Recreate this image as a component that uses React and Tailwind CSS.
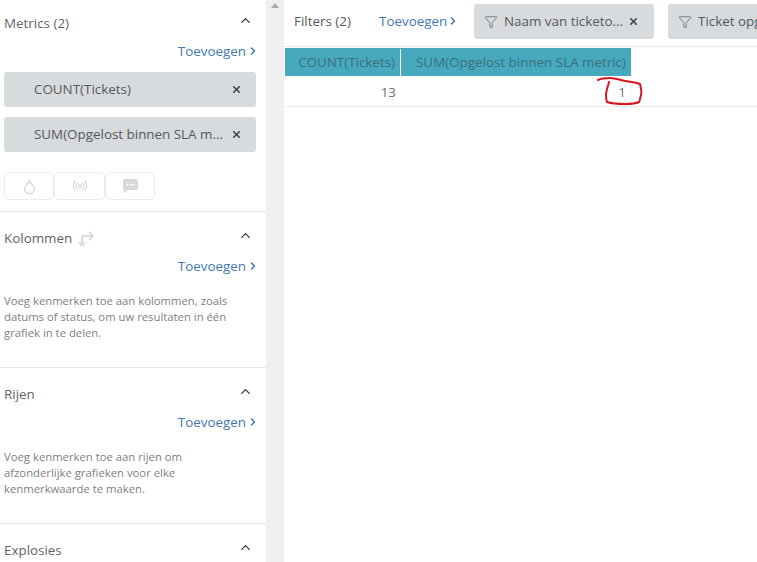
import React from 'react';
import { ChevronUp, ChevronRight, X, Filter, Droplet, Radio } from 'lucide-react';

function AddLink() {
	return (
		<div className="flex justify-end items-center h-5 text-[13.4px] text-[#3f78ae]">
			<span>Toevoegen</span>
			<ChevronRight size={12} strokeWidth={3} className="ml-[1px] -mr-[3px]" />
		</div>
	);
}

function SectionHead({ title, children }) {
	return (
		<div className="flex items-center h-5 pr-[3px]">
			<span className="text-[13.4px] text-[#5f6568]">{title}</span>
			{children}
			<ChevronUp size={15} strokeWidth={2} className="ml-auto -mt-[6px] text-[#2f3336]" />
		</div>
	);
}

function MetricChip({ label }) {
	return (
		<div className="flex items-center h-[35px] pl-[30px] pr-[14px] rounded-[3px] bg-[#d8dbdd] text-[13.4px] text-[#55595c]">
			<span className="flex-1 whitespace-nowrap">{label}</span>
			<X size={11} strokeWidth={3.5} className="shrink-0 text-[#3d4450]" />
		</div>
	);
}

function FilterChip({ label, className, closable }) {
	return (
		<div className={`flex items-center h-[35px] pl-[10px] pr-[15px] rounded-[3px] bg-[#d8dbdd] text-[13.4px] text-[#55595c] shrink-0 ${className}`}>
			<Filter size={14} strokeWidth={1.25} className="shrink-0 text-[#55595c]" />
			<span className="ml-[6px] flex-1 whitespace-nowrap">{label}</span>
			{closable && <X size={11} strokeWidth={3.5} className="shrink-0 text-[#3d4450]" />}
		</div>
	);
}

function Description({ children }) {
	return <p className="mt-[17px] max-w-[235px] text-[11.3px] leading-[16px] text-[#7c8184]">{children}</p>;
}

export default function App() {
	return (
		<div className="flex h-[562px] w-[757px] overflow-hidden bg-white font-['Open_Sans','Noto_Sans',sans-serif]">
			{/* Left: chart options */}
			<aside className="w-[266px] shrink-0 overflow-hidden">
				<section className="h-[212px] border-b border-[#e6e6e6] pl-[4px] pr-[10px] pt-[13px]">
					<SectionHead title="Metrics (2)" />
					<div className="mt-[8px]">
						<AddLink />
					</div>
					<div className="mt-[11px] flex flex-col gap-[10px]">
						<MetricChip label="COUNT(Tickets)" />
						<MetricChip label="SUM(Opgelost binnen SLA m..." />
					</div>
					<div className="mt-[20px] flex">
						<div className="flex h-[28px] w-[50px] items-center justify-center rounded-[5px] border border-[#ececec]">
							<Droplet size={17} className="text-[#d8d8d8]" />
						</div>
						<div className="flex h-[28px] w-[51px] items-center justify-center rounded-[5px] border border-[#ececec]">
							<Radio size={16} className="text-[#d8d8d8]" />
						</div>
						<div className="flex h-[28px] w-[50px] items-center justify-center rounded-[5px] border border-[#ececec]">
							<svg viewBox="0 0 15 14" className="h-[14px] w-[15px]">
								<path d="M2 0h11a2 2 0 0 1 2 2v7a2 2 0 0 1-2 2H5l-4 3v-3a2 2 0 0 1-1-2V2a2 2 0 0 1 2-2z" fill="#d8d8d8" />
								<circle cx="4.5" cy="5.5" r="1" fill="#fff" />
								<circle cx="7.5" cy="5.5" r="1" fill="#fff" />
								<circle cx="10.5" cy="5.5" r="1" fill="#fff" />
							</svg>
						</div>
					</div>
				</section>

				<section className="h-[156px] border-b border-[#e6e6e6] pl-[4px] pr-[10px] pt-[16px]">
					<SectionHead title="Kolommen">
						<svg viewBox="0 0 16 16" className="ml-[6px] h-[16px] w-[16px] text-[#dedede]" fill="none" stroke="currentColor" strokeWidth="2">
							<path d="M4 16V6h10M11 2l4 4-4 4M1 12l3 4 3-4" />
						</svg>
					</SectionHead>
					<div className="mt-[8px]">
						<AddLink />
					</div>
					<Description>
						Voeg kenmerken toe aan kolommen, zoals datums of status, om uw resultaten in één grafiek in te delen.
					</Description>
				</section>

				<section className="h-[156px] border-b border-[#e6e6e6] pl-[4px] pr-[10px] pt-[16px]">
					<SectionHead title="Rijen" />
					<div className="mt-[8px]">
						<AddLink />
					</div>
					<Description>
						Voeg kenmerken toe aan rijen om afzonderlijke grafieken voor elke kenmerkwaarde te maken.
					</Description>
				</section>

				<section className="pl-[4px] pr-[10px] pt-[16px]">
					<SectionHead title="Explosies" />
				</section>
			</aside>

			{/* Scrollbar gutter */}
			<div className="relative w-[18px] shrink-0 bg-[#f0f0f0]">
				<div className="absolute left-[5px] top-[3px] h-0 w-0 border-x-[4px] border-b-[5px] border-x-transparent border-b-[#a9a9a9]" />
			</div>

			{/* Right: filters and table */}
			<main className="relative min-w-0 flex-1 overflow-hidden">
				<div className="flex h-[47px] items-center border-b border-[#ececec] pl-[10px] pb-[3px]">
					<span className="w-[85px] shrink-0 text-[13.4px] text-[#55595c]">Filters (2)</span>
					<div className="flex w-[95px] shrink-0 items-center text-[13.4px] text-[#3f78ae]">
						<span>Toevoegen</span>
						<ChevronRight size={12} strokeWidth={3} />
					</div>
					<FilterChip label="Naam van ticketo..." className="w-[180px]" closable />
					<div className="w-[14px] shrink-0" />
					<FilterChip label="Ticket opgelost binnen" className="w-[200px]" />
				</div>
				<div className="ml-[1px] mt-[1px] flex h-[28px] w-[346px] bg-[#46a9bd] pt-[1px] text-[13.4px] text-[#3c6f7c]">
					<div className="flex w-[116px] items-center justify-end border-r border-white pr-[5px]">COUNT(Tickets)</div>
					<div className="flex flex-1 items-center justify-end pr-[5px]">SUM(Opgelost binnen SLA metric)</div>
				</div>
				<div className="flex h-[31px] border-b border-[#ececec] pl-[1px] pt-[2px] text-[13.4px] text-[#6b6f72]">
					<div className="flex w-[116px] items-center justify-end pr-[5px]">13</div>
					<div className="flex w-[230px] items-center justify-end border-r border-[#f2f2f2] pr-[4px]">1</div>
				</div>
				{/* Red hand-drawn annotation around the value */}
				<svg viewBox="0 0 50 32" className="absolute left-[312px] top-[76px] h-[32px] w-[50px]" fill="none" stroke="#d9141c" strokeWidth="2" strokeLinecap="round" strokeLinejoin="round">
					<path d="M2 4C6 2 10 2 14 2c5 0 10 2 15 3 5 1 10 1 15 3 1 4 2 8 1 11-1 3-1 6-2 7-4 2-9 2-14 2-6 0-12 0-18-2-1-2-1-4-1-7 0-4 2-9 3-13" />
				</svg>
			</main>
		</div>
	);
}
